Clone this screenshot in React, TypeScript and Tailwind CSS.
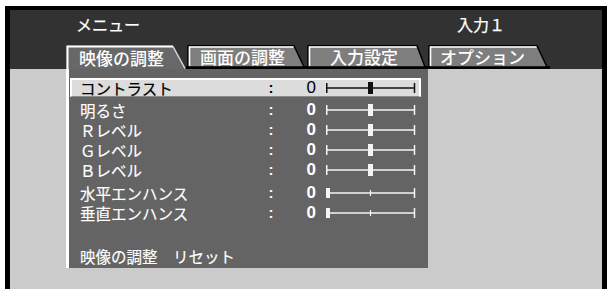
import React from "react";

const FONT = { fontFamily: '"Noto Sans CJK JP", "Noto Sans", sans-serif' };

function Slider({ kind, dark }: { kind: "center" | "left"; dark?: boolean }) {
  const c = dark ? "#111111" : "#f4f4f4";
  return (
    <svg width="90" height="14" viewBox="0 0 90 14" className="block">
      <line x1="0.75" y1="2" x2="0.75" y2="12" stroke={c} strokeWidth="1.5" />
      <line x1="88.5" y1="2" x2="88.5" y2="12" stroke={c} strokeWidth="1.5" />
      <line x1="0.75" y1="7" x2="88.5" y2="7" stroke={c} strokeWidth="1.6" />
      {kind === "center" ? (
        <rect x="42" y="1" width="5" height="12" fill={c} />
      ) : (
        <>
          <rect x="0" y="2" width="4" height="10" fill={c} />
          <line x1="44.5" y1="4" x2="44.5" y2="10" stroke={c} strokeWidth="1.2" />
        </>
      )}
    </svg>
  );
}

function Row({
  label,
  kind,
  selected,
  extra,
}: {
  label: string;
  kind: "center" | "left";
  selected?: boolean;
  extra?: string;
}) {
  const lh = selected ? "leading-[16px]" : "leading-[20px]";
  return (
    <div
      className={
        selected
          ? "ml-[1px] w-[351px] h-[19px] flex items-center bg-[#dcdcdc] border-t-2 border-l-2 border-r-2 border-white border-b border-b-[#8a8a8a] text-black"
          : `ml-[1px] w-[351px] h-[20px] flex items-center border-l-2 border-r-2 border-transparent text-white ${extra ?? ""}`
      }
    >
      <div
        className={
          selected
            ? `pl-[8px] w-[196px] text-[15.5px] whitespace-nowrap [-webkit-text-stroke:0.2px_#000] ${lh}`
            : `pl-[8px] w-[196px] text-[15.5px] whitespace-nowrap [-webkit-text-stroke:0.15px_#fff] ${lh}`
        }
      >
        {label}
      </div>
      <div className={`w-[6px] text-center text-[15px] font-bold font-['Liberation_Sans',sans-serif] ${lh}`}>:</div>
      <div
        className={
          selected
            ? `w-[42px] text-right text-[17px] font-['Liberation_Sans',sans-serif] ${lh}`
            : `w-[42px] text-right text-[17px] font-bold font-['Liberation_Sans',sans-serif] ${lh}`
        }
      >
        0
      </div>
      <div className="ml-[10px]">
        <Slider kind={kind} dark={selected} />
      </div>
    </div>
  );
}

function ActiveTab() {
  return (
    <div className="relative w-[120px] h-[24px]">
      <svg className="absolute inset-0" width="120" height="24" viewBox="0 0 120 24">
        <polygon points="0,24 0,0.5 107,0.5 119.5,24" fill="#686868" />
        <polyline points="1.5,24 1.5,1.5 107,1.5" fill="none" stroke="#ffffff" strokeWidth="2" />
        <line x1="107" y1="1.5" x2="119" y2="23.5" stroke="#d8d8d8" strokeWidth="1.5" />
      </svg>
      <span className="relative block pl-[13px] pt-[2px] text-[17px] leading-[22px] text-white font-medium whitespace-nowrap">
        映像の調整
      </span>
    </div>
  );
}

function InactiveTab({
  label,
  w,
  l,
  tr,
  br,
  pad,
}: {
  label: string;
  w: number;
  l: number;
  tr: number;
  br: number;
  pad: string;
}) {
  return (
    <div className="relative h-[24px]" style={{ width: w }}>
      <svg className="absolute inset-0" width={w} height="24" viewBox={`0 0 ${w} 24`}>
        <rect x="0" y="21" width={w} height="3" fill="#000000" />
        <polygon
          points={`${l},22 ${l},0.75 ${tr},0.75 ${br},22`}
          fill="#7e7e7e"
          stroke="#000000"
          strokeWidth="1.5"
        />
        <polyline
          points={`${l + 1.5},21 ${l + 1.5},2 ${tr - 0.5},2`}
          fill="none"
          stroke="#ffffff"
          strokeWidth="1.6"
        />
      </svg>
      <span
        className={`relative block pt-[1px] text-[17px] leading-[22px] text-white font-medium whitespace-nowrap ${pad}`}
      >
        {label}
      </span>
    </div>
  );
}

export default function App() {
  return (
    <div className="w-[607px] h-[289px] bg-white pl-[5px] pt-[6px] overflow-hidden" style={FONT}>
      <div className="w-[602px] h-[283px] border-l-[5px] border-t-[4px] border-r-[5px] border-black flex flex-col">
        {/* header */}
        <div className="h-[59px] bg-[#323232] flex flex-col">
          <div className="h-[35px] pt-[4px] flex text-white text-[16px] leading-[20px] [-webkit-text-stroke:0.25px_#fff]">
            <span className="ml-[66px] w-[381px] whitespace-nowrap">メニュー</span>
            <span className="whitespace-nowrap">入力１</span>
          </div>
          <div className="h-[24px] ml-[56px] flex">
            <ActiveTab />
            <InactiveTab label="画面の調整" w={121} l={2} tr={108} br={118} pad="pl-[14px]" />
            <InactiveTab label="入力設定" w={121} l={1} tr={110} br={118} pad="pl-[23px]" />
            <InactiveTab label="オプション" w={122} l={1} tr={109} br={119} pad="pl-[12px]" />
          </div>
        </div>
        {/* body */}
        <div className="flex-1 bg-[#cbcbcb]">
          <div className="ml-[56px] w-[362px] h-[199px] bg-[#646464] border-l-[3px] border-white pt-[9px] flex flex-col">
            <Row label="コントラスト" kind="center" selected />
            <div className="h-[3px]" />
            <Row label="明るさ" kind="center" />
            <Row label="Ｒレベル" kind="center" />
            <Row label="Ｇレベル" kind="center" />
            <Row label="Ｂレベル" kind="center" />
            <Row label="水平エンハンス" kind="left" extra="mt-[3px]" />
            <Row label="垂直エンハンス" kind="left" />
            <div className="mt-[23px] ml-[11px] h-[20px] text-white text-[15.5px] leading-[20px] whitespace-nowrap [-webkit-text-stroke:0.15px_#fff]">
              映像の調整　リセット
            </div>
          </div>
        </div>
      </div>
    </div>
  );
}
